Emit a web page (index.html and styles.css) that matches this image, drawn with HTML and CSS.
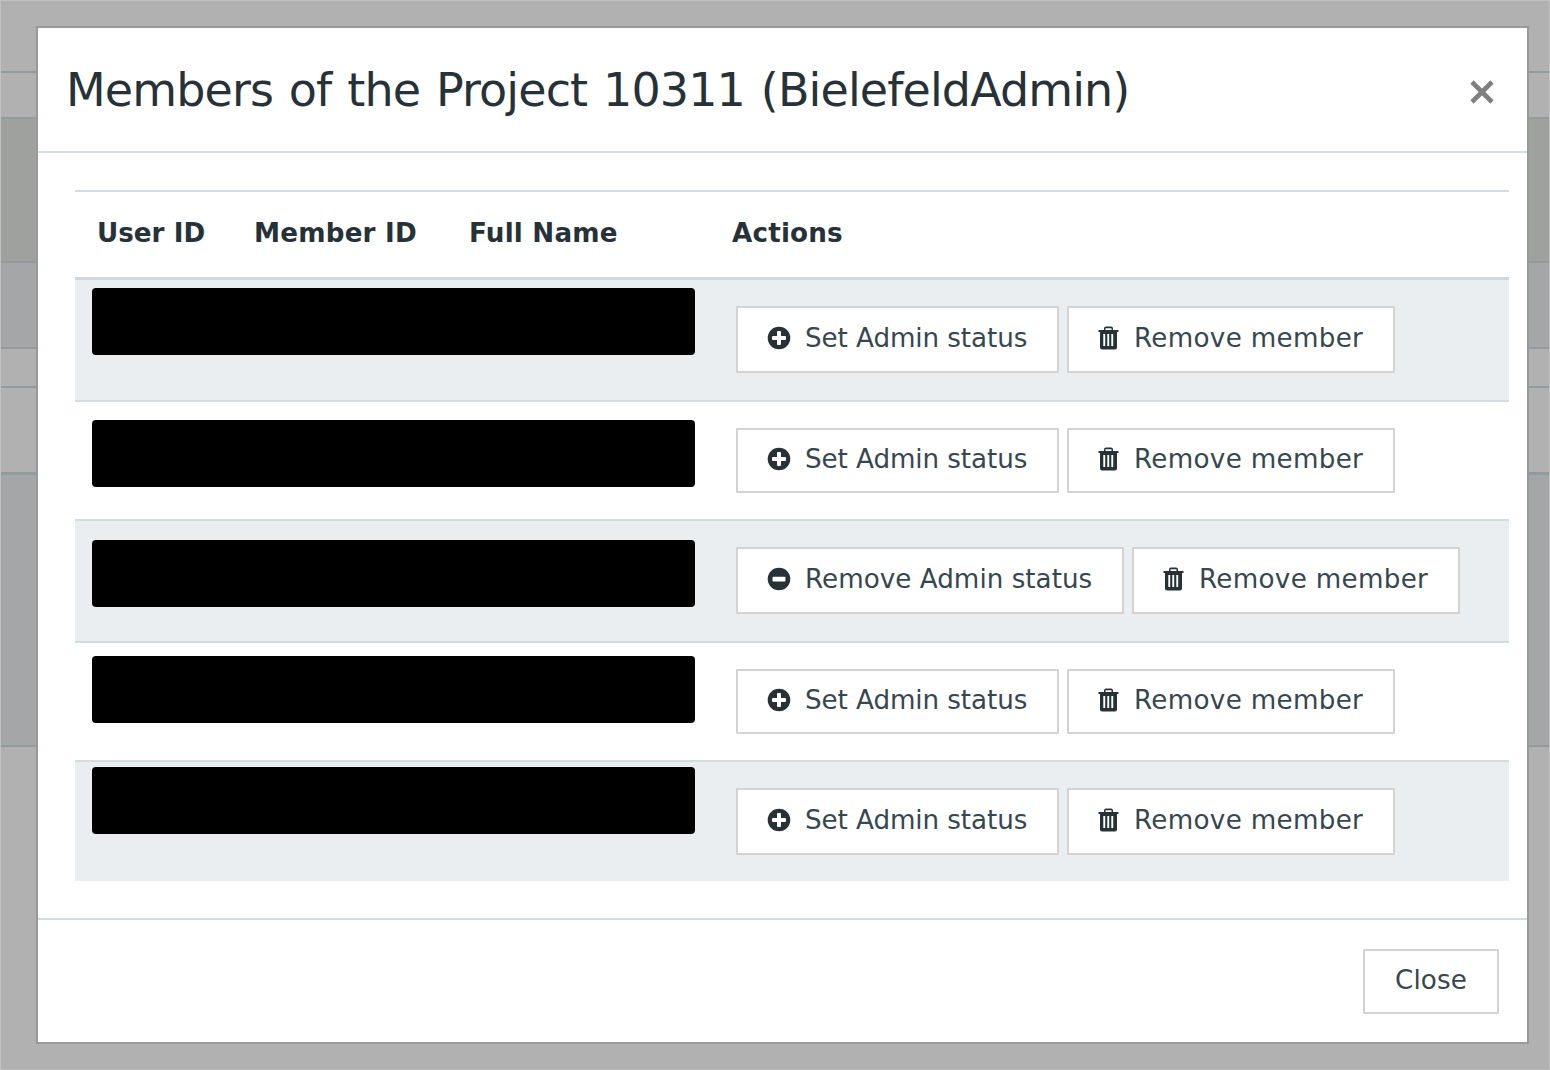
FILE: index.html
```html
<!DOCTYPE html>
<html lang="en">
<head>
<meta charset="utf-8">
<title>Project members</title>
<link rel="stylesheet" href="styles.css">
</head>
<body>
<svg width="0" height="0" class="defs" aria-hidden="true">
  <symbol id="plus" viewBox="0 0 24 24"><path fill-rule="evenodd" d="M12 .7a11.3 11.3 0 1 0 0 22.600a11.300 11.300 0 1 0 0-22.600ZM11 5h2q1 0 1 1v4h4q1 0 1 1v2q0 1-1 1h-4v4q0 1-1 1h-2q-1 0-1-1v-4H6q-1 0-1-1v-2q0-1 1-1h4V6q0-1 1-1Z"/></symbol>
  <symbol id="minus" viewBox="0 0 24 24"><path fill-rule="evenodd" d="M12 .7a11.3 11.3 0 1 0 0 22.600a11.300 11.300 0 1 0 0-22.600ZM6.500 9.800h11q1 0 1 1v2.600q0 1-1 1h-11q-1 0-1-1v-2.600q0-1 1-1Z"/></symbol>
  <symbol id="trash" viewBox="0 0 22 24"><path fill-rule="evenodd" d="M6 4V2.500Q6 .5 8 .5h5q2 0 2 2V4h5.500v2H19v15.500q0 2-2 2H4q-2 0-2-2V6H.5V4ZM7.500 4h6V2.200h-6ZM5.300 8v12h1.900V8ZM9.300 8v12h1.900V8ZM13.300 8v12h1.900V8Z"/></symbol>
</svg>
<div class="page" aria-hidden="true">
  <div class="band band-top"></div>
  <div class="band band-nav"></div>
  <div class="band band-green"></div>
  <div class="band band-panel"></div>
  <div class="band band-gap"></div>
  <div class="band band-head"></div>
  <div class="band band-list"></div>
  <div class="band band-rest"></div>
</div>
<div class="modal" role="dialog">
  <header class="modal-header">
    <h1 class="title"><span>Members of the Project 10311 (BielefeldAdmin)</span></h1>
    <button class="dismiss" aria-label="Dismiss"><svg viewBox="0 0 24 24"><path d="M2 2 22 22M22 2 2 22"/></svg></button>
  </header>
  <main class="members">
    <div class="head"><span class="user">User ID</span><span>Member ID</span><span>Full Name</span><span>Actions</span></div>
    <div class="row row-first">
      <div class="identity"><i class="redacted r1"></i></div>
      <button class="btn set"><svg class="icon"><use href="#plus"/></svg><span>Set Admin status</span></button>
      <button class="btn remove"><svg class="icon trash"><use href="#trash"/></svg><span>Remove member</span></button>
    </div>
    <div class="row row-second">
      <div class="identity"><i class="redacted r2"></i></div>
      <button class="btn set"><svg class="icon"><use href="#plus"/></svg><span>Set Admin status</span></button>
      <button class="btn remove"><svg class="icon trash"><use href="#trash"/></svg><span>Remove member</span></button>
    </div>
    <div class="row row-third">
      <div class="identity"><i class="redacted r3"></i></div>
      <button class="btn unset"><svg class="icon"><use href="#minus"/></svg><span>Remove Admin status</span></button>
      <button class="btn remove"><svg class="icon trash"><use href="#trash"/></svg><span>Remove member</span></button>
    </div>
    <div class="row row-fourth">
      <div class="identity"><i class="redacted r4"></i></div>
      <button class="btn set"><svg class="icon"><use href="#plus"/></svg><span>Set Admin status</span></button>
      <button class="btn remove"><svg class="icon trash"><use href="#trash"/></svg><span>Remove member</span></button>
    </div>
    <div class="row row-fifth">
      <div class="identity"><i class="redacted r5"></i></div>
      <button class="btn set"><svg class="icon"><use href="#plus"/></svg><span>Set Admin status</span></button>
      <button class="btn remove"><svg class="icon trash"><use href="#trash"/></svg><span>Remove member</span></button>
    </div>
  </main>
  <footer class="modal-footer"><button class="btn close"><span>Close</span></button></footer>
</div>
</body>
</html>
```
FILE: styles.css
```css
* { box-sizing: border-box; }
body { margin: 0; width: 1550px; height: 1070px; overflow: hidden; position: relative; font-family: "DejaVu Sans", sans-serif; color: #263238; }
.defs { position: absolute; }

.page { height: 1070px; background: #b1b1b1; border: 1px solid #c1c1c1; border-bottom-color: #b9b9b9; }
.band { border-bottom: 2px solid #929b9e; }
.band-top { height: 72px; }
.band-nav { height: 46px; }
.band-green { height: 144px; background: #9fa19f; }
.band-panel { height: 86px; background: #a5a6a8; }
.band-gap { height: 39px; }
.band-head { height: 87px; border-bottom: 3px solid #919a9c; }
.band-list { height: 272px; background: #a4a6a8; }
.band-rest { border: 0; }

.modal { position: absolute; left: 36px; top: 26px; width: 1493px; height: 1018px; background: #fff; border: 2px solid #999; display: flex; flex-direction: column; }
.modal-header { height: 125px; border-bottom: 2px solid #d3dee1; display: flex; justify-content: space-between; align-items: center; padding: 0 33px 0 28px; }
.title { margin: 0; font-size: 46px; font-weight: 400; line-height: 54px; letter-spacing: -0.88px; word-spacing: 2.1px; white-space: nowrap; }
.dismiss { border: 0; background: none; padding: 0; width: 24px; height: 24px; display: flex; margin-top: 4px; }
.dismiss svg { width: 24px; height: 24px; fill: none; stroke: #808080; stroke-width: 4.6; }

.members { margin: 37px 18px 0 37px; }
.head { height: 87px; border-top: 2px solid #d5dce0; display: grid; grid-template-columns: 157px 215px 263px auto; padding-left: 22px; line-height: 83px; font-size: 26.2px; font-weight: 700; letter-spacing: 0.2px; }
.user { letter-spacing: 0; }
.row { border-top: 2px solid #d3dce0; display: flex; align-items: stretch; padding: 26px 0; gap: 8px; }
.row:nth-child(even) { background: #eaeef1; }
.row-first { height: 123px; border-top: 3px solid #cfd8dd; }
.row-second { height: 119px; }
.row-third { height: 122px; }
.row-fourth { height: 119px; }
.row-fifth { height: 121px; }
.identity { width: 653px; position: relative; flex: none; }
.redacted { position: absolute; left: 17px; width: 603px; height: 67px; border-radius: 4px; background: #000; }
.r1 { top: -18px; }
.r2 { top: -8px; }
.r3 { top: -7px; }
.r4 { top: -13px; }
.r5 { top: -21px; }

.btn { font: 26.2px "DejaVu Sans", sans-serif; color: #37474f; background: #fff; border: 2px solid #d3d3d3; border-radius: 1px; padding: 0 0 3px 29px; display: flex; align-items: center; white-space: nowrap; flex: none; }
.set { width: 323px; letter-spacing: -0.08px; }
.unset { width: 388px; letter-spacing: 0.02px; }
.remove { width: 328px; letter-spacing: 0.3px; }
.icon { width: 24px; height: 24px; fill: #263238; margin-right: 14px; flex: none; }
.icon.trash { width: 22px; }
.row .btn { height: 67px; }
.row-second .btn, .row-fourth .btn { height: 65px; }

.modal-footer { margin-top: 37px; border-top: 2px solid #d3dce0; flex: 1; padding: 29px 28px 0 0; display: flex; justify-content: flex-end; align-items: flex-start; }
.close { width: 136px; height: 65px; padding-left: 30px; letter-spacing: 0.15px; }
```
